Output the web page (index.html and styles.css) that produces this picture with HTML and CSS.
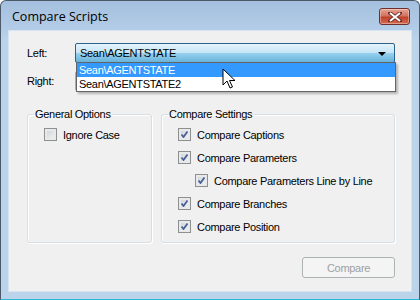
FILE: index.html
```html
<!DOCTYPE html>
<html lang="en">
<head>
  <meta charset="UTF-8">
  <title>Compare Scripts</title>
  <link rel="stylesheet" href="styles.css">
</head>
<body>

  <div class="window">
    <div class="titlebar">
      <span class="title">Compare Scripts</span>
      <span class="close-btn">
        <svg width="14" height="10" viewBox="0 0 14 10">
          <path d="M2 1 L12 9 M12 1 L2 9" stroke="#6b2a2a" stroke-width="3.6" stroke-linecap="square"/>
          <path d="M2 1 L12 9 M12 1 L2 9" stroke="#fff" stroke-width="2"/>
        </svg>
      </span>
    </div>

    <div class="client">
      <div class="row row-left">
        <label class="lbl">Left:</label>
        <div class="combo combo-hot">
          <span>Sean\AGENTSTATE</span>
          <span class="arrow"></span>
        </div>
        <div class="dropdown">
          <div class="item selected">Sean\AGENTSTATE</div>
          <div class="item">Sean\AGENTSTATE2</div>
        </div>
        <svg class="cursor" width="14" height="22" viewBox="0 0 14 22">
          <path d="M1 1 L1 17 L5 13 L8 20 L10.5 19 L7.5 12.5 L13 12.5 Z" fill="#fff" stroke="#000" stroke-width="1" stroke-linejoin="round"/>
        </svg>
      </div>

      <div class="row row-right">
        <label class="lbl">Right:</label>
        <div class="combo">
          <span></span>
        </div>
      </div>

      <div class="groups">
        <fieldset class="group group-general">
          <legend>General Options</legend>
          <div class="check"><span class="box"></span>Ignore Case</div>
        </fieldset>

        <fieldset class="group group-compare">
          <legend>Compare Settings</legend>
          <div class="check"><span class="box checked"></span>Compare Captions</div>
          <div class="check"><span class="box checked"></span>Compare Parameters</div>
          <div class="check indent"><span class="box checked"></span>Compare Parameters Line by Line</div>
          <div class="check"><span class="box checked"></span>Compare Branches</div>
          <div class="check"><span class="box checked"></span>Compare Position</div>
        </fieldset>
      </div>

      <div class="footer">
        <button class="btn" disabled>Compare</button>
      </div>
    </div>
  </div>

</body>
</html>
```

FILE: styles.css
```css
body {
  margin: 0;
  background: #ffffff;
  font-family: "Liberation Sans", Arial, sans-serif;
  font-size: 11px;
  letter-spacing: -0.3px;
  color: #000;
}
.window {
  width: 420px;
  height: 300px;
  box-sizing: border-box;
  border: 1px solid #4a5a6a;
  border-bottom: 1px solid #2ab6d6;
  border-radius: 6px 6px 0 0;
  background: linear-gradient(#a4c0de 0px, #b4cde8 30px, #bcd4ea 40px);
  display: flex;
  flex-direction: column;
}
.titlebar {
  height: 29px;
  display: flex;
  align-items: center;
  justify-content: space-between;
  padding: 0 9px 0 11px;
}
.title {
  font-family: "Open Sans", "Noto Sans", sans-serif;
  font-size: 12.5px;
  letter-spacing: 0;
  color: #000;
  margin-top: 1px;
}
.close-btn {
  width: 29px;
  height: 15px;
  border: 1px solid #6e2e2e;
  border-radius: 3px;
  background: linear-gradient(#e8a493 0%, #d2735f 45%, #c0432c 55%, #d26a50 100%);
  box-shadow: inset 0 0 0 1px rgba(255, 255, 255, 0.35);
  display: flex;
  align-items: center;
  justify-content: center;
  margin-top: 2px;
}
.client {
  position: relative;
  margin: 0 7px;
  height: 262px;
  background: #f0f0f0;
  border: 1px solid #d6e3f0;
  box-sizing: border-box;
}
.row {
  display: flex;
  align-items: center;
  height: 20px;
  position: relative;
}
.row-left {
  margin-top: 12px;
}
.row-right {
  margin-top: 8px;
}
.lbl {
  width: 48px;
  padding-left: 18px;
}
.combo {
  width: 320px;
  height: 20px;
  box-sizing: border-box;
  border: 1px solid #acacac;
  border-radius: 2px;
  background: linear-gradient(#f2f2f2, #dcdcdc);
  display: flex;
  align-items: center;
  justify-content: space-between;
  padding: 0 8px 0 4px;
}
.combo-hot {
  border-color: #2c628b;
  background: linear-gradient(#e5f4fc 0%, #c4e5f6 50%, #98d1ef 51%, #68b3db 100%);
}
.arrow {
  width: 0;
  height: 0;
  border-left: 4px solid transparent;
  border-right: 4px solid transparent;
  border-top: 4px solid #000;
  margin-top: 1px;
}
.dropdown {
  position: absolute;
  left: 67px;
  top: 19px;
  width: 320px;
  box-sizing: border-box;
  border: 1px solid #646464;
  background: #fff;
  box-shadow: 2px 2px 2px rgba(0, 0, 0, 0.25);
  z-index: 2;
}
.item {
  height: 14px;
  line-height: 14px;
  padding-left: 2px;
}
.item.selected {
  background: #3399ff;
  color: #fff;
}
.cursor {
  position: absolute;
  left: 213px;
  top: 25px;
  z-index: 3;
}
.groups {
  display: flex;
  margin-top: 17px;
  padding-left: 18px;
  gap: 9px;
}
.group {
  margin: 0;
  height: 135px;
  box-sizing: border-box;
  border: 1px solid #d5dfe5;
  border-radius: 3px;
  box-shadow: inset 1px 1px 0 #fff, 1px 1px 0 #fff;
  padding: 3px 0 0 16px;
}
.group legend {
  padding: 0 1px;
  margin-left: -10px;
}
.group-general {
  width: 125px;
}
.group-compare {
  width: 234px;
}
.check {
  display: flex;
  align-items: center;
  height: 23px;
}
.check.indent {
  padding-left: 17px;
}
.box {
  width: 13px;
  height: 13px;
  box-sizing: border-box;
  border: 1px solid #8e8f8f;
  background: linear-gradient(135deg, #cbcfd5, #f6f6f6);
  box-shadow: inset 0 0 0 2px #e8e9ea;
  margin-right: 6px;
  flex: none;
}
.box.checked {
  background: url("data:image/svg+xml;utf8,<svg xmlns='http://www.w3.org/2000/svg' width='11' height='11'><path d='M2.5 5.5 L4.5 8 L8.5 2.5' fill='none' stroke='%234a5f97' stroke-width='1.8'/></svg>") center no-repeat, linear-gradient(135deg, #cbcfd5, #f6f6f6);
}
.footer {
  display: flex;
  justify-content: flex-end;
  padding: 14px 16px 0 0;
}
.btn {
  width: 93px;
  height: 21px;
  border: 1px solid #adb2b5;
  border-radius: 3px;
  background: #f4f4f4;
  color: #a0a0a0;
  font-family: "Liberation Sans", Arial, sans-serif;
  font-size: 11px;
  letter-spacing: -0.3px;
  padding: 0;
}
```
